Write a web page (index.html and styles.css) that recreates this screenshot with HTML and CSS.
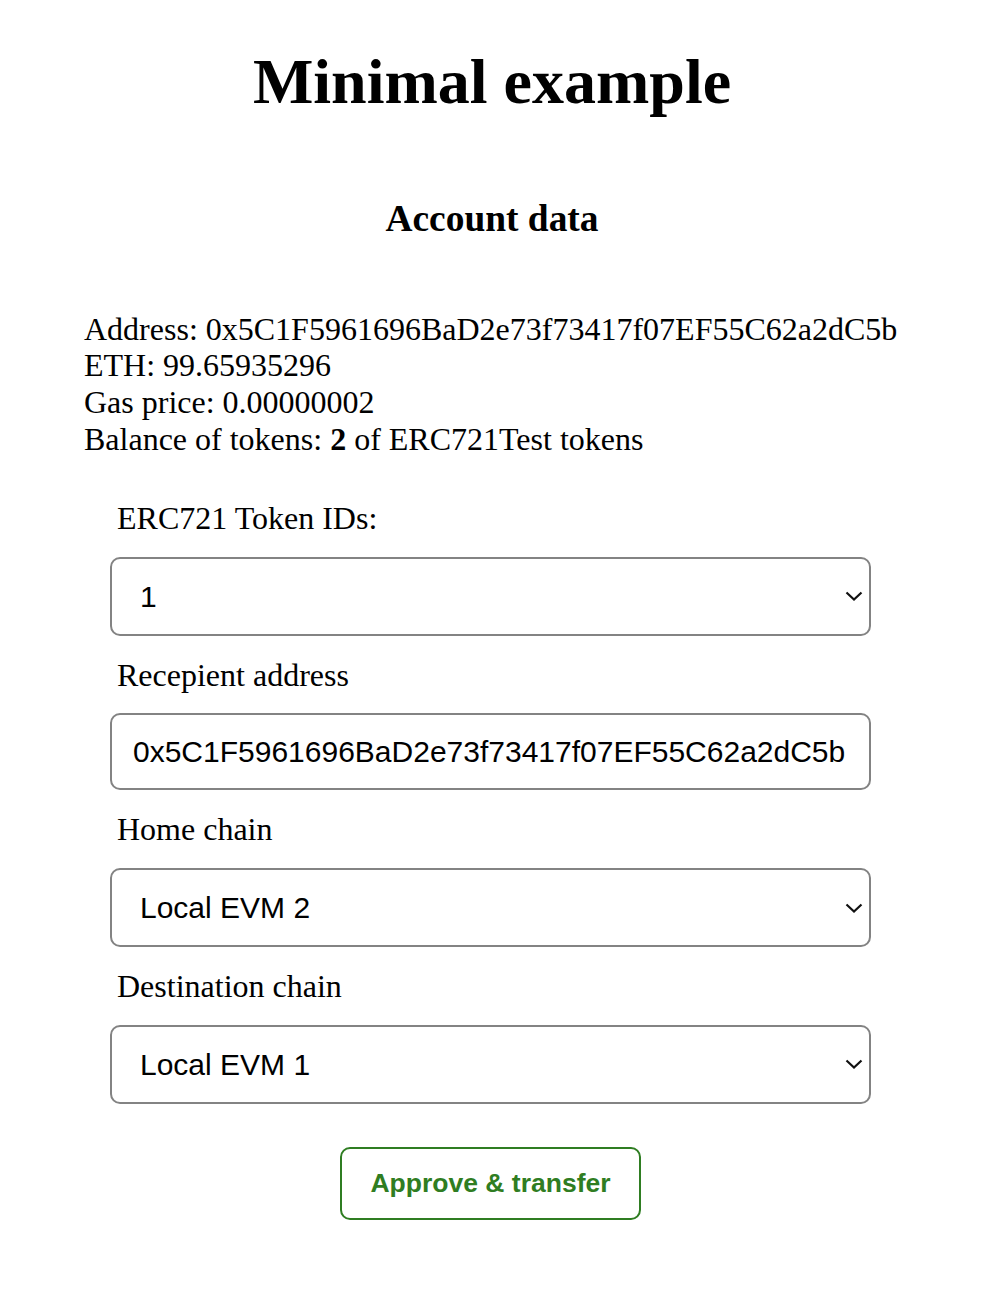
FILE: index.html
```html
<!DOCTYPE html>
<html>
<head>
<meta charset="utf-8">
<link rel="stylesheet" href="styles.css">
</head>
<body>
<div class="app">
  <h1 class="title">Minimal example</h1>
  <h3 class="subtitle">Account data</h3>
  <div class="info">
    <div>Address: 0x5C1F5961696BaD2e73f73417f07EF55C62a2dC5b</div>
    <div>ETH: 99.65935296</div>
    <div>Gas price: 0.00000002</div>
    <div>Balance of tokens: <b>2</b> of ERC721Test tokens</div>
  </div>
  <form class="form">
    <label class="label label-first">ERC721 Token IDs:</label>
    <div class="field select-wrap">
      <select class="select"><option>1</option><option>2</option></select>
      <svg class="chev" width="18" height="10" viewBox="0 0 18 10"><path d="M1.5 1.5 L9 8.5 L16.5 1.5" fill="none" stroke="#111" stroke-width="2.2"/></svg>
    </div>
    <label class="label">Recepient address</label>
    <div class="field">
      <input class="input" type="text" value="0x5C1F5961696BaD2e73f73417f07EF55C62a2dC5b">
    </div>
    <label class="label">Home chain</label>
    <div class="field select-wrap">
      <select class="select"><option>Local EVM 2</option></select>
      <svg class="chev" width="18" height="10" viewBox="0 0 18 10"><path d="M1.5 1.5 L9 8.5 L16.5 1.5" fill="none" stroke="#111" stroke-width="2.2"/></svg>
    </div>
    <label class="label">Destination chain</label>
    <div class="field select-wrap">
      <select class="select"><option>Local EVM 1</option></select>
      <svg class="chev" width="18" height="10" viewBox="0 0 18 10"><path d="M1.5 1.5 L9 8.5 L16.5 1.5" fill="none" stroke="#111" stroke-width="2.2"/></svg>
    </div>
    <div class="actions">
      <button type="button" class="btn">Approve &amp; transfer</button>
    </div>
  </form>
</div>
</body>
</html>
```

FILE: styles.css
```css
html, body {
  margin: 0;
  padding: 0;
  background: #fff;
}
body {
  font-family: "Liberation Serif", "Times New Roman", serif;
  font-size: 32px;
  color: #000;
}
.app {
  display: flex;
  flex-direction: column;
}
.title {
  font-size: 64px;
  font-weight: bold;
  text-align: center;
  margin: 45px 0 0;
  line-height: 1.149;
}
.subtitle {
  font-size: 37.44px;
  font-weight: bold;
  text-align: center;
  margin: 78px 0 0;
  line-height: 1.149;
}
.info {
  margin: 71px 0 0 84px;
  line-height: 36.8px;
}
.info b {
  font-weight: bold;
}
.form {
  width: 761px;
  margin: 42px 0 0 110px;
  display: flex;
  flex-direction: column;
}
.label {
  display: block;
  padding-left: 7px;
  line-height: 36.8px;
  margin-top: 21px;
}
.label-first {
  margin-top: 0;
}
.field {
  margin-top: 20px;
}
.select-wrap {
  position: relative;
}
.select {
  appearance: none;
  -webkit-appearance: none;
  display: block;
  width: 100%;
  height: 79px;
  box-sizing: border-box;
  border: 2px solid #838383;
  border-radius: 10px;
  background: #fff;
  font-family: "Liberation Sans", Arial, sans-serif;
  font-size: 30px;
  color: #000;
  padding: 0 60px 0 28px;
  margin: 0;
}
.chev {
  position: absolute;
  right: 8px;
  top: 50%;
  margin-top: -5px;
  pointer-events: none;
}
.input {
  display: block;
  width: 100%;
  height: 77px;
  box-sizing: border-box;
  border: 2px solid #838383;
  border-radius: 10px;
  background: #fff;
  font-family: "Liberation Sans", Arial, sans-serif;
  font-size: 30px;
  color: #000;
  padding: 0 0 0 21px;
  margin: 0;
  outline: none;
}
.actions {
  display: flex;
  justify-content: center;
  margin-top: 43px;
}
.btn {
  width: 301px;
  height: 73px;
  box-sizing: border-box;
  border: 2px solid #2f7d22;
  border-radius: 10px;
  background: #fff;
  color: #2f7d22;
  font-family: "Liberation Sans", Arial, sans-serif;
  font-weight: bold;
  font-size: 26.5px;
  padding: 0;
  cursor: pointer;
}
```
